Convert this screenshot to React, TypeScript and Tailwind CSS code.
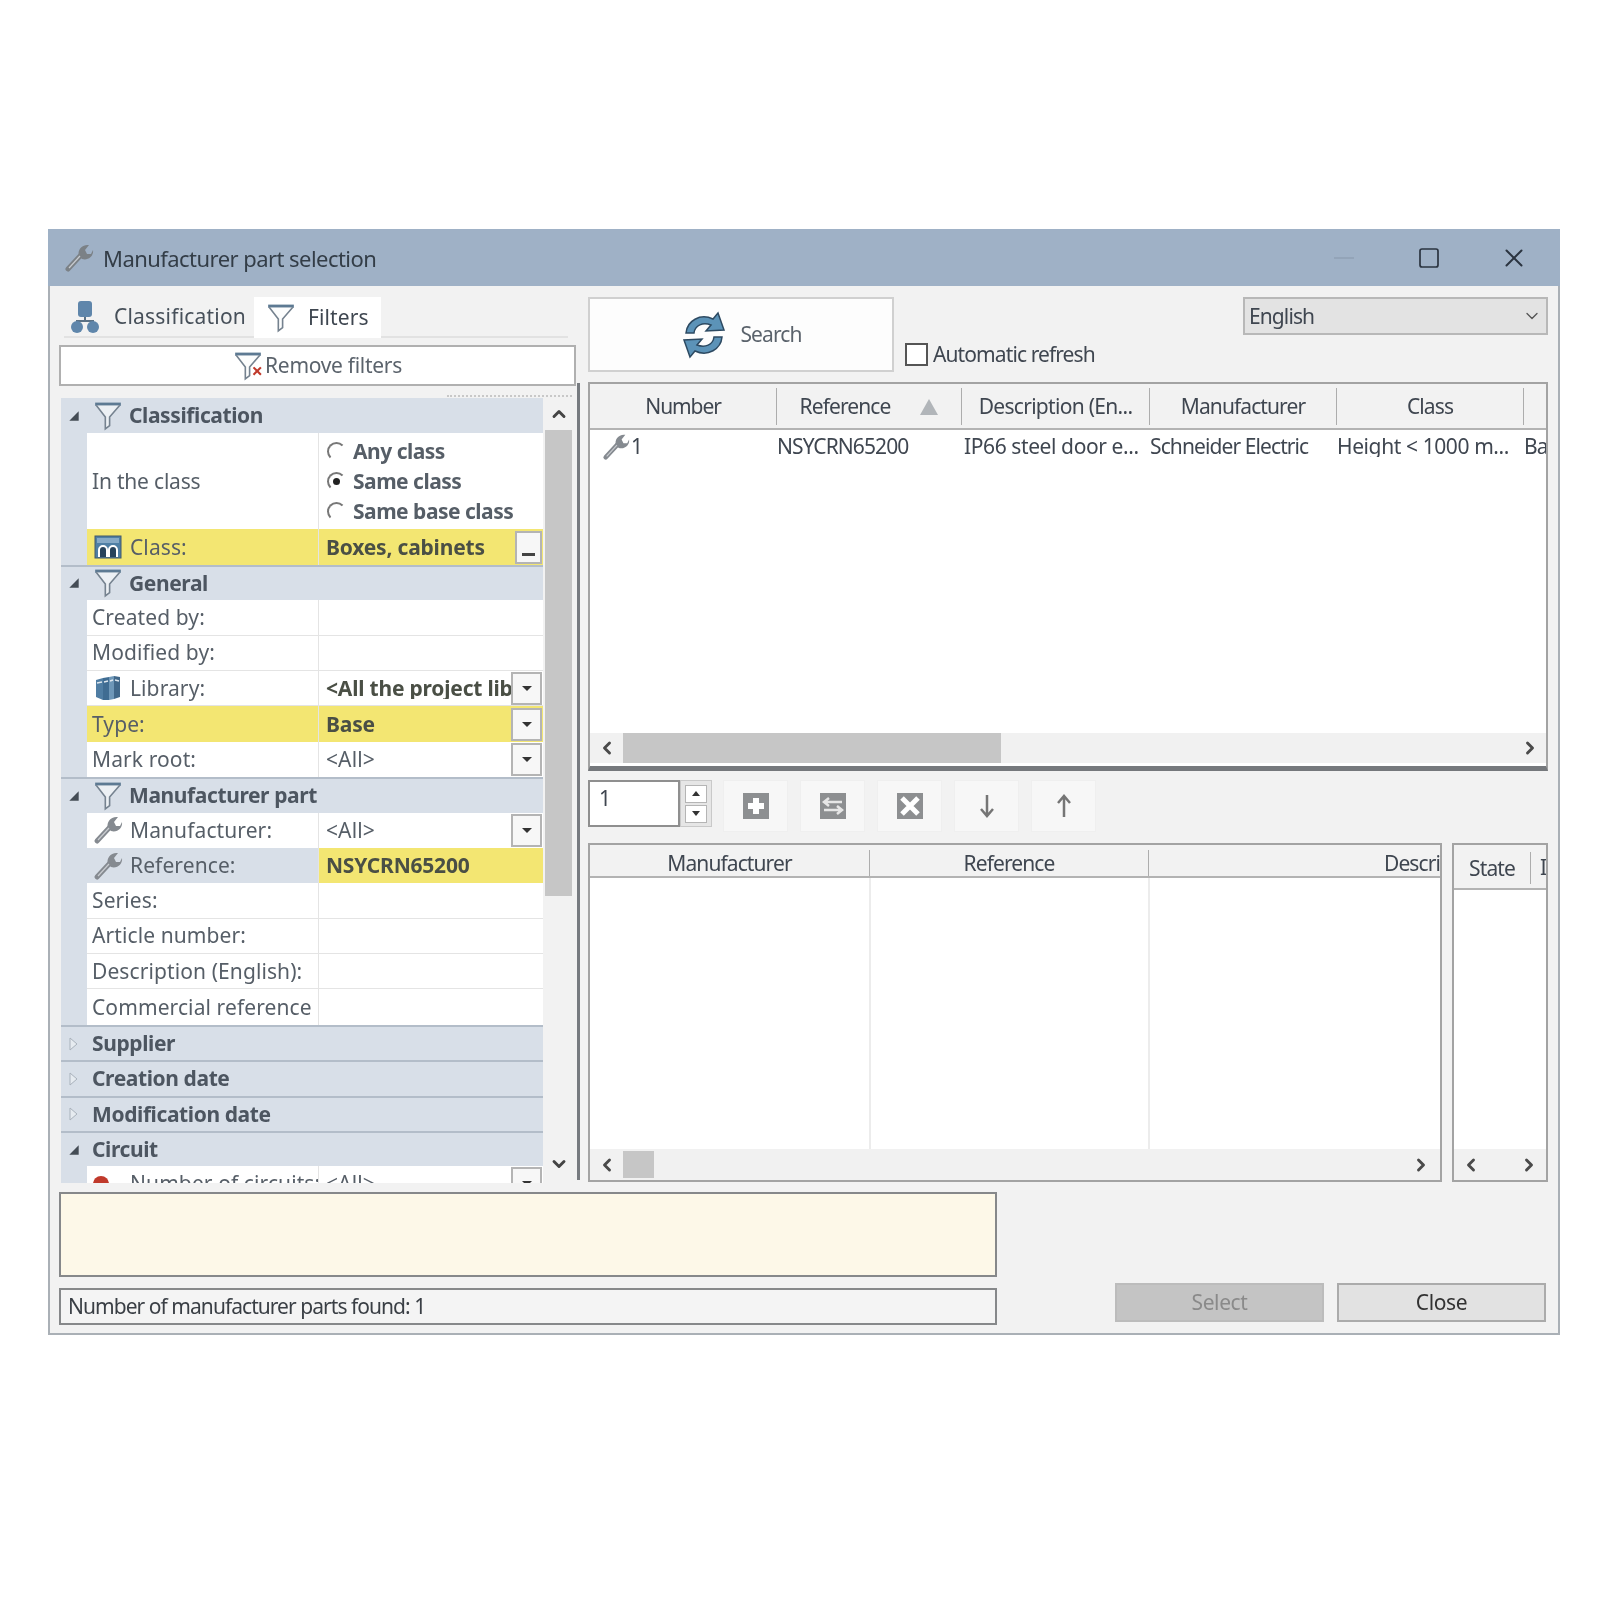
import React from "react";
import { ChevronLeft, ChevronRight, ChevronUp, ChevronDown, X, Square } from "lucide-react";

const Wrench = ({ s = 30, c = "#858a90" }: { s?: number; c?: string }) => (
  <svg width={s} height={s} viewBox="0 0 30 30" className="shrink-0">
    <path d="M4 26 L17 12" stroke={c} strokeWidth="5" strokeLinecap="round" />
    <path d="M15 13 C13 7 18 1 25 2 L21 7 L23 11 L27 11 L29 7 C30 13 24 18 18 16 Z" fill={c} />
    <path d="M5 25 L16 13" stroke="#c9ccd0" strokeWidth="1.2" />
  </svg>
);

const Funnel = ({ s = 30 }: { s?: number }) => (
  <svg width={s} height={s} viewBox="0 0 28 28" className="shrink-0">
    <path d="M2 3 H26" stroke="#5d7a93" strokeWidth="3" />
    <path d="M3 4 L11.5 15 V26 L15.5 23 V15 L25 4" fill="#fafbfc" fillOpacity="0.6" stroke="#75828f" strokeWidth="1.5" />
  </svg>
);

const Tree = () => (
  <svg width="30" height="32" viewBox="0 0 30 32" className="shrink-0">
    <path d="M15 14 V20 M7 24 V20 H23 V24" stroke="#5b7185" strokeWidth="2" fill="none" />
    <rect x="8" y="0" width="14" height="16" rx="3" fill="#5f86ab" />
    <circle cx="7" cy="26" r="6" fill="#5f86ab" />
    <circle cx="23" cy="26" r="6" fill="#5f86ab" />
  </svg>
);

const ClassIcon = () => (
  <svg width="28" height="24" viewBox="0 0 28 24" className="shrink-0">
    <rect x="1" y="1" width="26" height="22" fill="#4f7fa5" stroke="#43586b" />
    <rect x="3" y="3" width="22" height="5" fill="#86a9c6" />
    <path d="M5 22 V15 A4 4 0 0 1 13 15 V22 M15 22 V15 A4 4 0 0 1 23 15 V22" stroke="#fff" strokeWidth="2" fill="#27435c" />
  </svg>
);

const LibIcon = () => (
  <svg width="26" height="28" viewBox="0 0 26 28" className="shrink-0">
    <path d="M1 6 L8 4 V26 L1 23 Z" fill="#4f7da3" />
    <path d="M8 4 L14 3 V26 L8 26 Z" fill="#3f6c92" />
    <path d="M14 3 L19 2 V25 L14 26 Z" fill="#6e97b8" />
    <path d="M19 2 L25 3 V23 L19 25 Z" fill="#41688a" />
    <path d="M2 9 L7 8 M9 8 L13 7 M15 7 L18 6 M20 6 L24 7" stroke="#dfe8ef" strokeWidth="1.5" />
  </svg>
);

const RefreshIcon = () => (
  <svg width="48" height="48" viewBox="0 0 48 48" className="shrink-0">
    <path d="M6 22 C7 10 20 2 33 8 L38 2 L44 19 L26 20 L31 14 C23 11 15 14 14 22 Z" fill="#5c93b8" stroke="#2d4a62" strokeWidth="1.5" />
    <path d="M42 26 C41 38 28 46 15 40 L10 46 L4 29 L22 28 L17 34 C25 37 33 34 34 26 Z" fill="#5c93b8" stroke="#2d4a62" strokeWidth="1.5" />
  </svg>
);

const Caret = () => (
  <svg width="14" height="14" viewBox="0 0 12 12" className="shrink-0">
    <path d="M10 2 V10 H2 Z" fill="#444c55" />
  </svg>
);
const CaretOpen = () => (
  <svg width="12" height="16" viewBox="0 0 12 14" className="shrink-0">
    <path d="M2 1 L9 7 L2 13 Z" fill="#e6ebf0" stroke="#a9b2bc" />
  </svg>
);

const Drop = () => (
  <div className="w-[31px] h-[33px] shrink-0 border-2 border-[#b4b4b4] bg-[#f7f7f7] flex items-center justify-center mr-[1px]">
    <div className="w-0 h-0 border-x-[5px] border-x-transparent border-t-[5px] border-t-[#333]" />
  </div>
);

const Head = ({ label, icon, open = true, line = false }: { label: string; icon?: boolean; open?: boolean; line?: boolean }) => (
  <div className={`h-[35.4px] bg-[#d8dfe8] flex items-center ${line ? "border-t-2 border-[#b3bdc9]" : ""}`}>
    <div className="w-[26px] flex justify-center shrink-0">{open ? <Caret /> : <CaretOpen />}</div>
    {icon && <div className="ml-[6px] mr-[6px]"><Funnel /></div>}
    <span className={`font-bold text-[#4d5661] tracking-[-0.4px] ${icon ? "" : "ml-[5px]"}`}>{label}</span>
  </div>
);

const Row = ({
  label, value, icon, labelBg = "bg-white", valueBg = "bg-white", bold, drop, dots, lineClass = "border-b border-[#e4e4e4]",
}: {
  label: string; value?: string; icon?: React.ReactNode; labelBg?: string; valueBg?: string; bold?: boolean; drop?: boolean; dots?: boolean; lineClass?: string;
}) => (
  <div className="h-[35.4px] bg-[#d8dfe8] flex">
    <div className="w-[26px] shrink-0" />
    <div className={`w-[232px] shrink-0 flex items-center pl-[5px] gap-[7px] whitespace-nowrap overflow-hidden border-r border-[#e4e4e4] ${labelBg} ${lineClass}`}>
      {icon && <div className="w-[31px] flex justify-center shrink-0">{icon}</div>}
      <span className="text-[#565e67]">{label}</span>
    </div>
    <div className={`flex-1 min-w-0 flex items-center ${valueBg} ${lineClass}`}>
      <span className={`flex-1 min-w-0 pl-[7px] whitespace-nowrap overflow-hidden ${bold ? "font-bold text-[#4a4f45] tracking-[-0.2px]" : "text-[#565e67]"}`}>{value}</span>
      {drop && <Drop />}
      {dots && (
        <div className="w-[27px] h-[33px] shrink-0 border-2 border-[#b4b4b4] bg-[#f7f7f7] flex items-end justify-center pb-[6px] mr-[1px]">
          <div className="w-[13px] h-[3px] bg-[#444]" />
        </div>
      )}
    </div>
  </div>
);

const Radio = ({ label, on }: { label: string; on?: boolean }) => (
  <div className="flex items-center h-[30px] pl-[8px]">
    <div className="w-[19px] h-[19px] rounded-full border-2 border-transparent border-l-[#777] border-t-[#777] flex items-center justify-center mr-[7px]">
      {on && <div className="w-[7px] h-[7px] rounded-full bg-[#222]" />}
    </div>
    <span className="font-bold text-[#565e67] whitespace-nowrap tracking-[-0.5px]">{label}</span>
  </div>
);

const Th = ({ w, children, sort }: { w: number; children: React.ReactNode; sort?: boolean }) => (
  <div style={{ width: w }} className="h-[37px] shrink-0 flex items-center justify-center border-r border-[#adadad] whitespace-nowrap overflow-hidden text-[#3f4650] relative">
    <span>{children}</span>
    {sort && <div className="ml-[30px] w-0 h-0 border-x-[9px] border-x-transparent border-b-[16px] border-b-[#b1b5b9]" />}
  </div>
);

const Td = ({ w, children }: { w: number; children: React.ReactNode }) => (
  <div style={{ width: w }} className="shrink-0 whitespace-nowrap overflow-hidden text-[#3f4650] flex items-center">{children}</div>
);

const ToolBtn = ({ children }: { children: React.ReactNode }) => (
  <div className="w-[65px] h-[52px] shrink-0 bg-[#f7f7f7] border border-[#efefef] flex items-center justify-center">{children}</div>
);

const Boxed = ({ kind }: { kind: "plus" | "swap" | "x" }) => (
  <svg width="26" height="26" viewBox="0 0 26 26">
    <rect width="26" height="26" fill="#8d8f91" />
    {kind === "plus" && <path d="M13 5 V21 M5 13 H21" stroke="#fff" strokeWidth="6" />}
    {kind === "swap" && <path d="M4 9 H22 M4 17 H22 M9 5 L4 9 L9 13 M17 13 L22 17 L17 21" stroke="#e6e6e6" strokeWidth="2.5" fill="none" />}
    {kind === "x" && <path d="M5 5 L21 21 M21 5 L5 21" stroke="#fff" strokeWidth="5" />}
  </svg>
);

const Arrow = ({ up }: { up?: boolean }) => (
  <svg width="16" height="26" viewBox="0 0 16 26">
    {up ? (
      <path d="M8 24 V3 M2 10 L8 3 L14 10" stroke="#757575" strokeWidth="2.5" fill="none" />
    ) : (
      <path d="M8 2 V23 M2 16 L8 23 L14 16" stroke="#757575" strokeWidth="2.5" fill="none" />
    )}
  </svg>
);

const Chev = ({ left }: { left?: boolean }) =>
  left ? <ChevronLeft size={20} strokeWidth={3.5} color="#4a4a4a" /> : <ChevronRight size={20} strokeWidth={3.5} color="#4a4a4a" />;

export default function App() {
  return (
    <div className="min-h-[1602px] bg-white pt-[229px] pl-[48px] text-[21px] leading-none blur-[0.5px]" style={{ fontFamily: '"Noto Sans", sans-serif' }}>
      <div className="w-[1512px] h-[1106px] bg-[#f2f2f2] border-x-2 border-b-2 border-[#aab0b6] flex flex-col">
        {/* title bar */}
        <div className="h-[57px] shrink-0 bg-[#9fb1c6] flex items-center pl-[16px] pr-[31px] -mx-[2px]">
          <Wrench s={30} c="#7b8186" />
          <span className="ml-[9px] text-[#333d47] text-[22px] tracking-[-0.55px]">Manufacturer part selection</span>
          <div className="ml-auto flex items-center">
            <div className="w-[20px] h-[2px] bg-[#93a4b8]" />
            <Square size={24} strokeWidth={1.7} color="#2b3440" className="ml-[63px]" />
            <X size={30} strokeWidth={1.6} color="#2b3440" className="ml-[58px]" />
          </div>
        </div>

        {/* main */}
        <div className="h-[897px] shrink-0 flex pl-[9px] pt-[11px]">
          {/* left */}
          <div className="w-[517px] shrink-0 flex flex-col tracking-[0.1px]">
            <div className="h-[41px] shrink-0 flex ml-[5px] mr-[8px] border-b-2 border-[#e2e2e2]">
              <div className="w-[190px] flex items-center pl-[6px]">
                <Tree />
                <span className="ml-[14px] text-[#47505a] tracking-[0.2px]">Classification</span>
              </div>
              <div className="w-[127px] h-[41px] bg-white flex items-center pl-[12px]">
                <Funnel />
                <span className="ml-[12px] text-[#3e4650]">Filters</span>
              </div>
            </div>
            <div className="h-[41px] shrink-0 mt-[7px] border-2 border-[#b0b0b0] bg-white flex items-center justify-center">
              <div className="relative w-[30px] h-[30px] mr-[2px]">
                <Funnel />
                <span className="absolute right-0 bottom-0 text-[#c0392b] text-[20px] font-bold leading-none">×</span>
              </div>
              <span className="text-[#5b636c] tracking-[-0.3px]">Remove filters</span>
            </div>
            <div className="h-[12px] shrink-0 flex justify-end items-end pr-[4px]">
              <div className="w-[125px] border-t-2 border-dotted border-[#c8c8c8] mb-[1px]" />
            </div>
            <div className="ml-[2px] w-[511px] flex h-[785px] shrink-0 overflow-hidden">
              <div className="w-[482px] shrink-0">
                <Head label="Classification" icon />
                <div className="h-[96px] bg-[#d8dfe8] flex">
                  <div className="w-[26px] shrink-0" />
                  <div className="w-[232px] shrink-0 bg-white border-r border-[#e4e4e4] flex items-center pl-[5px] text-[#565e67] tracking-[-0.2px]">In the class</div>
                  <div className="flex-1 bg-white flex flex-col justify-center">
                    <Radio label="Any class" />
                    <Radio label="Same class" on />
                    <Radio label="Same base class" />
                  </div>
                </div>
                <Row label="Class:" value="Boxes, cabinets" bold dots icon={<ClassIcon />} labelBg="bg-[#f3e672]" valueBg="bg-[#f3e672]" lineClass="" />
                <Head label="General" icon line />
                <Row label="Created by:" />
                <Row label="Modified by:" />
                <Row label="Library:" value="<All the project libraries>" bold drop icon={<LibIcon />} />
                <Row label="Type:" value="Base" bold drop labelBg="bg-[#f3e672]" valueBg="bg-[#f3e672]" lineClass="" />
                <Row label="Mark root:" value="<All>" drop lineClass="" />
                <Head label="Manufacturer part" icon line />
                <Row label="Manufacturer:" value="<All>" drop icon={<Wrench />} lineClass="" />
                <Row label="Reference:" value="NSYCRN65200" bold icon={<Wrench />} labelBg="bg-[#d8dfe8]" valueBg="bg-[#f3e672]" lineClass="" />
                <Row label="Series:" />
                <Row label="Article number:" />
                <Row label="Description (English):" />
                <Row label="Commercial reference" lineClass="" />
                <Head label="Supplier" open={false} line />
                <Head label="Creation date" open={false} line />
                <Head label="Modification date" open={false} line />
                <Head label="Circuit" line />
                <Row label="Number of circuits:" value="<All>" drop icon={<div className="w-[16px] h-[16px] rounded-full bg-[#c0392b] mr-[14px]" />} />
              </div>
              <div className="w-[29px] shrink-0 flex flex-col">
                <div className="h-[32px] flex items-center justify-center pl-[2px]"><ChevronUp size={20} strokeWidth={3.5} color="#444" /></div>
                <div className="h-[466px] ml-[2px] bg-[#c6c6c6]" />
                <div className="h-[278px] flex items-end justify-center pl-[2px]"><ChevronDown size={20} strokeWidth={3.5} color="#444" /></div>
              </div>
            </div>
          </div>

          {/* splitter */}
          <div className="w-[3px] ml-[1px] mt-[86px] h-[797px] bg-[#777b80] shrink-0" />

          {/* right */}
          <div className="w-[960px] ml-[8px] shrink-0 flex flex-col tracking-[-0.9px]">
            <div className="h-[85px] flex shrink-0">
              <div className="w-[306px] h-[75px] bg-[#fdfdfd] border-2 border-[#d0d0d0] flex items-center justify-center">
                <RefreshIcon />
                <span className="ml-[12px] text-[#5b636c]">Search</span>
              </div>
              <div className="ml-[11px] mt-[45px] h-[24px] flex items-center">
                <div className="w-[23px] h-[23px] border-2 border-[#555] bg-white" />
                <span className="ml-[5px] text-[#3f4650]">Automatic refresh</span>
              </div>
              <div className="ml-auto w-[305px] h-[38px] bg-[#e3e3e3] border-2 border-[#b8b8b8] flex items-center pl-[4px] pr-[4px] text-[#3f4650]">
                <span>English</span>
                <ChevronDown size={20} strokeWidth={1.6} color="#555" className="ml-auto" />
              </div>
            </div>

            {/* table 1 */}
            <div className="h-[389px] shrink-0 border-2 border-[#a3a3a3] border-b-[5px] border-b-[#75787c] flex flex-col bg-white overflow-hidden">
              <div className="h-[46px] shrink-0 bg-[#f2f2f2] border-b-[2px] border-[#b3b3b3] flex items-end pb-[3px]">
                <Th w={187}><span className="tracking-[-1.1px]">Number</span></Th>
                <Th w={185} sort>Reference</Th>
                <Th w={188}><span className="tracking-[-0.7px]">Description (En...</span></Th>
                <Th w={187}>Manufacturer</Th>
                <Th w={187}>Class</Th>
              </div>
              <div className="h-[33px] flex items-center shrink-0">
                <Td w={187}><div className="ml-[12px]"><Wrench s={28} /></div><span className="ml-[1px]">1</span></Td>
                <Td w={185}>NSYCRN65200</Td>
                <Td w={188}><span className="ml-[2px] tracking-[-0.4px]">IP66 steel door e...</span></Td>
                <Td w={187}>Schneider Electric</Td>
                <Td w={187}><span className="tracking-[-0.4px]">Height &lt; 1000 m...</span></Td>
                <Td w={24}>Bas</Td>
              </div>
              <div className="flex-1" />
              <div className="h-[30px] shrink-0 bg-[#f1f1f1] flex items-center mb-[3px]">
                <div className="w-[33px] flex justify-center"><Chev left /></div>
                <div className="w-[378px] h-[30px] bg-[#c6c6c6]" />
                <div className="ml-auto w-[33px] flex justify-center"><Chev /></div>
              </div>
            </div>

            {/* toolbar */}
            <div className="h-[72px] shrink-0 flex pt-[9px]">
              <div className="w-[92px] h-[47px] bg-white border-2 border-[#8f8f8f] pl-[9px] pt-[6px] text-[#3f4650]">1</div>
              <div className="w-[32px] h-[47px] bg-[#e6e6e6] border border-[#c9c9c9] flex flex-col items-center justify-center gap-[2px]">
                <div className="w-[22px] h-[18px] bg-white border border-[#b5b5b5] flex items-center justify-center"><div className="w-0 h-0 border-x-[4px] border-x-transparent border-b-[5px] border-b-[#333]" /></div>
                <div className="w-[22px] h-[18px] bg-white border border-[#b5b5b5] flex items-center justify-center"><div className="w-0 h-0 border-x-[4px] border-x-transparent border-t-[5px] border-t-[#333]" /></div>
              </div>
              <div className="ml-[11px] flex gap-[12px]">
                <ToolBtn><Boxed kind="plus" /></ToolBtn>
                <ToolBtn><Boxed kind="swap" /></ToolBtn>
                <ToolBtn><Boxed kind="x" /></ToolBtn>
                <ToolBtn><Arrow /></ToolBtn>
                <ToolBtn><Arrow up /></ToolBtn>
              </div>
            </div>

            {/* lower tables */}
            <div className="h-[339px] shrink-0 flex">
              <div className="w-[854px] shrink-0 border-2 border-[#a3a3a3] bg-white flex flex-col overflow-hidden">
                <div className="h-[33px] shrink-0 bg-[#f2f2f2] border-b-2 border-[#b3b3b3] flex items-end">
                  <div className="w-[280px] h-[26px] border-r border-[#adadad] flex items-center justify-center text-[#3f4650]">Manufacturer</div>
                  <div className="w-[279px] h-[26px] border-r border-[#adadad] flex items-center justify-center text-[#3f4650]">Reference</div>
                  <div className="flex-1 h-[26px] flex items-center justify-end overflow-hidden whitespace-nowrap text-[#3f4650]">Descri</div>
                </div>
                <div className="flex-1 flex">
                  <div className="w-[281px] border-r-2 border-[#ececec]" />
                  <div className="w-[279px] border-r-2 border-[#ececec]" />
                </div>
                <div className="h-[31px] shrink-0 bg-[#f1f1f1] flex items-center">
                  <div className="w-[33px] flex justify-center"><Chev left /></div>
                  <div className="w-[31px] h-[27px] bg-[#c6c6c6]" />
                  <div className="ml-auto w-[38px] flex justify-center"><Chev /></div>
                </div>
              </div>
              <div className="w-[96px] ml-[10px] shrink-0 border-2 border-[#a3a3a3] bg-white flex flex-col overflow-hidden">
                <div className="h-[45px] shrink-0 bg-[#f2f2f2] border-b-2 border-[#b3b3b3] flex items-end pb-[4px]">
                  <div className="w-[77px] h-[32px] border-r border-[#adadad] flex items-center justify-center text-[#3f4650] shrink-0">State</div>
                  <span className="ml-[9px] mb-[6px] overflow-hidden text-[#3f4650]">I</span>
                </div>
                <div className="flex-1" />
                <div className="h-[31px] shrink-0 bg-[#f1f1f1] flex items-center justify-between px-[7px]">
                  <Chev left /><Chev />
                </div>
              </div>
            </div>
          </div>
        </div>

        {/* bottom */}
        <div className="flex pl-[9px] pt-[9px]">
          <div className="w-[938px] shrink-0 flex flex-col">
            <div className="h-[85px] bg-[#fdf8e8] border-2 border-[#86888a]" />
            <div className="h-[37px] mt-[11px] bg-[#f4f4f4] border-2 border-[#86888a] flex items-center pl-[7px] text-[#3a3f45] tracking-[-0.95px]">Number of manufacturer parts found: 1</div>
          </div>
          <div className="ml-[118px] mt-[91px] flex gap-[13px]">
            <div className="w-[209px] h-[39px] bg-[#c4c4c4] border-2 border-[#bcbcbc] flex items-center justify-center text-[#8a8a8a] tracking-[-0.4px]">Select</div>
            <div className="w-[209px] h-[39px] bg-[#e2e2e2] border-2 border-[#ababab] flex items-center justify-center text-[#333] tracking-[-0.4px]">Close</div>
          </div>
        </div>
      </div>
    </div>
  );
}
